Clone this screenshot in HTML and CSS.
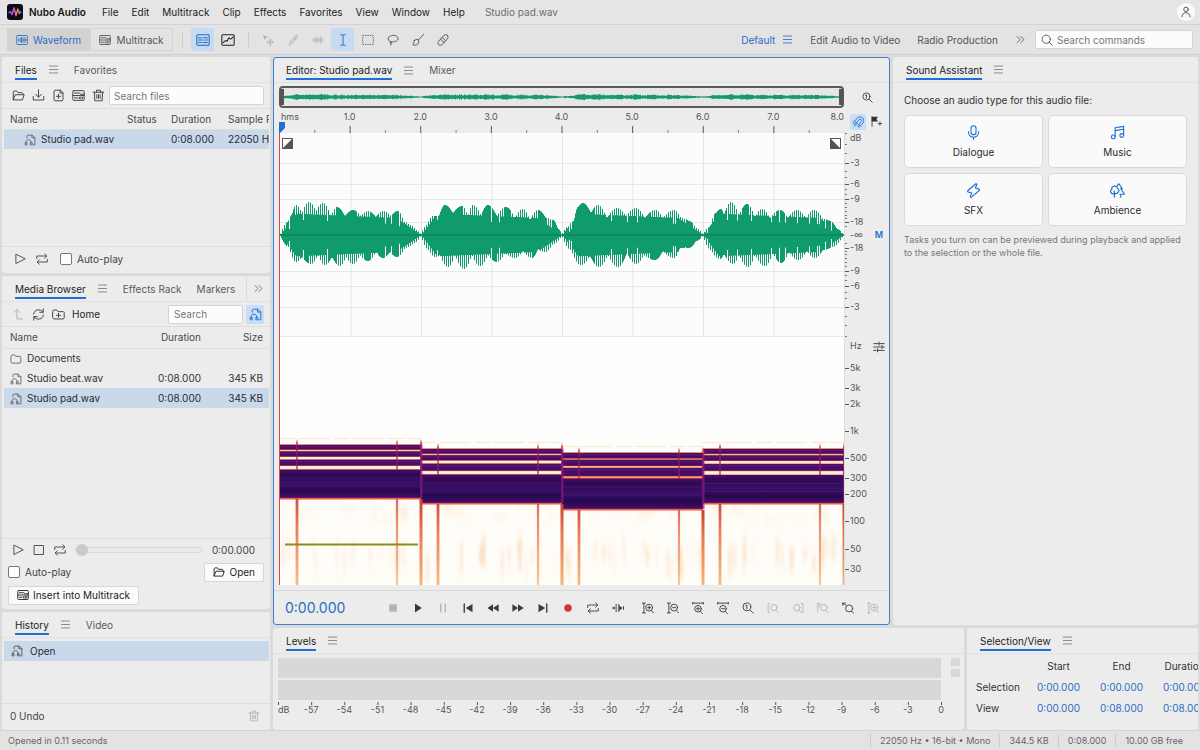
FILE: index.html
```html
<!DOCTYPE html>
<html lang="en">
<head>
<meta charset="utf-8">
<title>Nubo Audio</title>
<link rel="stylesheet" href="styles.css">
</head>
<body>
<svg class="sprite" aria-hidden="true">
  <symbol id="menu" viewBox="0 0 16 16"><path d="M2 3h12M2 8h12M2 13h12"/></symbol>
  <symbol id="wave" viewBox="0 0 16 16"><rect x="1" y="2" width="14" height="12" rx="1"/><path d="M3.500 7v2M5.500 5.500v5M7.500 4.500v7M9 6.500v3M10.700 4.500v7M12.700 6.500v3"/></symbol>
  <symbol id="tracks" viewBox="0 0 16 16"><rect x="1" y="2" width="14" height="12" rx="1"/><path d="M1 8h14M3 5h6l2 1.500h4M3 11h4M9 10v2M11 9.500v3M13 10v2"/></symbol>
  <symbol id="spectral" viewBox="0 0 16 16"><rect x="1" y="2" width="14" height="12" rx="1"/><path d="M3 5.500h3M8 5.500h5M3 8h5M10 8h3M3 10.800h3M8 10.800h5"/></symbol>
  <symbol id="pitch" viewBox="0 0 16 16"><rect x="1" y="2" width="14" height="12" rx="1"/><path d="M2.500 11l3-2.500 1.500 1 2-4 2 1.500L14 4.500"/></symbol>
  <symbol id="move" viewBox="0 0 16 16"><path class="solid" d="M1 1l7 3-3 1.200L3.800 8z"/><path class="solid" d="M11 6l2 2.500h-1.300v1.800H13.500V9L16 11l-2.500 2v-1.300h-1.800v1.800H13l-2 2.500-2-2.500h1.300v-1.800H8.500V13L6 11l2.500-2v1.300h1.800V8.500H9z"/></symbol>
  <symbol id="razor" viewBox="0 0 16 16"><path d="M3 14.500l2.500-5.500L11 2.500l3-1-1 4-5.500 6zM5.500 9l2.500 2.500M11 4.500v2M9.500 6v2"/></symbol>
  <symbol id="slip" viewBox="0 0 16 16"><path d="M0 8h6M10 8h6M5 3.500v9M7.200 5.500v5M9 5.500v5M11.200 3.500v9M3 6v4M13.200 6v4"/></symbol>
  <symbol id="ibeam" viewBox="0 0 16 16"><path d="M5 1h2l1 .8L9 1h2M8 1.800v12.400M5 15h2l1-.8 1 .8h2"/></symbol>
  <symbol id="marquee" viewBox="0 0 16 16"><rect x="1" y="2" width="14" height="12" stroke-dasharray="1.800 1.400" stroke-linecap="butt"/></symbol>
  <symbol id="lasso" viewBox="0 0 16 16"><path d="M5 10.500C-1.500 8 1.500 1.800 8.500 1.800S17.500 8.500 10 10.200c-2 .5-3.500.5-5 .3M5 10.500c-2 .5-1.500 2.500 0 2s1-2 0-2M5.500 12.500c.5 1 0 2-1 2.800"/></symbol>
  <symbol id="brush" viewBox="0 0 16 16"><path d="M15.500.5L8.500 8M3 8.500l4-1.500 2.500 2.300-2 4.500c-2 1.500-4.500 1.200-6.500.5 1.500-1 1.500-3.500 2-5.800z"/></symbol>
  <symbol id="heal" viewBox="0 0 16 16"><rect x="4.800" y="-.5" width="6.400" height="17" rx="3.200" transform="rotate(42 8 8)"/><path d="M4.500 7l5 4.300M6.700 4.500l4.800 4.300"/></symbol>
  <symbol id="more" viewBox="0 0 16 16"><path d="M3 3.500L7.500 8 3 12.500M8.500 3.500L13 8l-4.500 4.500"/></symbol>
  <symbol id="search" viewBox="0 0 16 16"><circle cx="7" cy="7" r="5.500"/><path d="M11 11l4 4"/></symbol>
  <symbol id="user" viewBox="0 0 16 16"><circle cx="8" cy="4.500" r="3"/><path d="M2.500 14.500c0-7.500 11-7.500 11 0"/></symbol>
  <symbol id="open" viewBox="0 0 16 16"><path d="M1.500 13V3.500l1-1h3.500l1.500 2h5l1 1V7M1.500 13L4 7h11l-2 6z"/></symbol>
  <symbol id="folder" viewBox="0 0 16 16"><path d="M1.500 4l1-1.500h3.500l1.500 2h6l1 1V12l-1 1.500h-11l-1-1.500z"/></symbol>
  <symbol id="newfolder" viewBox="0 0 16 16"><path d="M1 4l1-1.500h4l1.500 2H14l1 1V12l-1 1.500H2L1 12zM8 6.500v5M5.500 9h5"/></symbol>
  <symbol id="import" viewBox="0 0 16 16"><path d="M8 1v9M4.500 6.500L8 10l3.500-3.500M1.500 9v4.500h13V9"/></symbol>
  <symbol id="newfile" viewBox="0 0 16 16"><path d="M10 1.500H3.500l-1 1v11l1 1h9l1-1V5zM10 1.500V5h3.500M8 6.500v5M5.500 9h5"/></symbol>
  <symbol id="trash" viewBox="0 0 16 16"><path d="M1.500 4h13M5.500 4V1.500h5V4M3 4l.5 10.500h9L13 4M6 7v4.500M8 7v4.500M10 7v4.500"/></symbol>
  <symbol id="audiofile" viewBox="0 0 16 16"><path d="M4 5V2.500l1-1h6L14.500 5v9.500H12.500M10.500 1.500V5h4"/><path d="M2.500 12v-1c0-4.500 7-4.500 7 0v1M3.500 11.500H1.500v3h2zM10.500 11.500h-2v3h2z"/></symbol>
  <symbol id="play" viewBox="0 0 16 16"><path d="M2.500 2v12L14.500 8z"/></symbol>
  <symbol id="stop" viewBox="0 0 16 16"><rect x="2" y="2" width="12" height="12"/></symbol>
  <symbol id="loop" viewBox="0 0 16 16"><path d="M1 7.500V4h13M11.500 1L14.500 4l-3 3M15 8.500V12H2M4.500 9l-3 3 3 3"/></symbol>
  <symbol id="up" viewBox="0 0 16 16"><path d="M2.500 5.500L6 2l3.500 3.500M6 2v11.500h7"/></symbol>
  <symbol id="refresh" viewBox="0 0 16 16"><path d="M2 7.500C2.500 1.500 10 .5 13.500 5M13.800 1V5.300H9.500M14 8.500c-.5 6-8 7-11.500 2.500M2.200 15v-4.300H6.500"/></symbol>
  <symbol id="mic" viewBox="0 0 16 16"><rect x="5.300" y=".8" width="5.400" height="9.500" rx="2.700"/><path d="M2.500 7c0 8 11 8 11 0M8 13v2.500"/></symbol>
  <symbol id="music" viewBox="0 0 16 16"><path d="M5.500 12.500V3l9-1.500v9.500M5.500 6l9-1.500"/><circle cx="3.500" cy="12.700" r="2"/><circle cx="12.500" cy="11.200" r="2"/></symbol>
  <symbol id="bolt" viewBox="0 0 16 16"><path d="M10.500.8L2 8l-.3 1.300 4.500 1.500L4.500 15l1 .3L14.200 8l.2-1.200-4.400-1.500L11.700 1z"/></symbol>
  <symbol id="trees" viewBox="0 0 16 16"><path d="M4.700 15.200V8.500M4.700 11.500C-.5 12 0 7.500 2 6.800c-1-4 5.500-4.800 6-1 2.500 1.200 1.800 5.700-3.300 5.700zM7.500 3L9.500.8 13 6h-1.500l4 6h-5M11.500 12v3.200"/></symbol>
  <symbol id="magnet" viewBox="0 0 16 16"><path d="M1.500 8.500l5.500-5.500c5-5 11.500 1.500 7.500 6.500L9.500 15l-2.200-2.200 5-5.300c1.500-2-.8-4.200-2.800-2.700L4 10.800zM3.500 6.800l2.300 2.300M9 11l2.300 2.300M3 14l4-4.500"/></symbol>
  <symbol id="flag" viewBox="0 0 16 16"><path class="solid" d="M1 1h9L8 4.300 10 8H1z"/><path d="M1.500 1v14M13 8.500v5M10.500 11h5"/></symbol>
  <symbol id="sliders" viewBox="0 0 16 16"><path d="M1 3.500h5M8 3.500h7M1 8h9M12 8h3M1 12.500h3M6 12.500h9M8 1.500v4M12 6v4M6 10.500v4"/></symbol>
  <symbol id="zoomfit" viewBox="0 0 16 16"><circle cx="6.500" cy="6.500" r="5.200"/><path d="M10.500 10.500l4.500 4.500M5 5l1.500-1v5"/></symbol>
  <symbol id="fplay" viewBox="0 0 16 16"><path class="solid" d="M4 2v12l9-6z"/></symbol>
  <symbol id="fstop" viewBox="0 0 16 16"><rect class="solid" x="3" y="3" width="10" height="10"/></symbol>
  <symbol id="fpause" viewBox="0 0 16 16"><path stroke-width="2" d="M5 3v10M11 3v10"/></symbol>
  <symbol id="first" viewBox="0 0 16 16"><path stroke-width="1.800" d="M3 2.500v11"/><path class="solid" d="M14 2.500v11L5 8z"/></symbol>
  <symbol id="last" viewBox="0 0 16 16"><path stroke-width="1.800" d="M13 2.500v11"/><path class="solid" d="M2 2.500v11L11 8z"/></symbol>
  <symbol id="rew" viewBox="0 0 16 16"><path class="solid" d="M8 3v10L.5 8zM15.500 3v10L8 8z"/></symbol>
  <symbol id="ffwd" viewBox="0 0 16 16"><path class="solid" d="M8 3v10l7.500-5zM.5 3v10L8 8z"/></symbol>
  <symbol id="rec" viewBox="0 0 16 16"><circle class="solid" cx="8" cy="8" r="5"/></symbol>
  <symbol id="skip" viewBox="0 0 16 16"><path d="M.5 8H4M5.500 3v10M9 3v10M15.300 6v4M2.500 6.500v3"/><path class="solid" d="M9.500 4.500v7L14 8z"/></symbol>
  <symbol id="zi-v" viewBox="0 0 16 16"><path d="M.5 1.500h4M2.500 1.500v13M.5 14.500h4M12.500 11.500L15.500 14.500M7.500 7.500h4M9.500 5.500v4"/><circle cx="9.500" cy="7.500" r="4.600"/></symbol>
  <symbol id="zo-v" viewBox="0 0 16 16"><path d="M.5 1.500h4M2.500 1.500v13M.5 14.500h4M12.500 11.500L15.500 14.500M7.500 7.500h4"/><circle cx="9.500" cy="7.500" r="4.600"/></symbol>
  <symbol id="zi-h" viewBox="0 0 16 16"><path d="M1 1.500h14M1 .3v2.400M15 .3v2.400M11 12.500l3 3M6 9h4M8 7v4"/><circle cx="8" cy="9" r="4.400"/></symbol>
  <symbol id="zo-h" viewBox="0 0 16 16"><path d="M1 1.500h14M1 .3v2.400M15 .3v2.400M11 12.500l3 3M6 9h4"/><circle cx="8" cy="9" r="4.400"/></symbol>
  <symbol id="z-in" viewBox="0 0 16 16"><path d="M3.500 2H1.500v12h2M12.500 11.500L15.500 14.500"/><circle cx="9.200" cy="7.500" r="4.200"/></symbol>
  <symbol id="z-out" viewBox="0 0 16 16"><path d="M12.500 2h2v12h-2M9 11l3 3"/><circle cx="6.500" cy="7.500" r="4.200"/></symbol>
  <symbol id="z-sel" viewBox="0 0 16 16"><path d="M1 2v11M3.500 2v4M1 2h3M12.500 11.500L15.500 14.500"/><circle cx="9.200" cy="7.500" r="4.200"/></symbol>
  <symbol id="z-back" viewBox="0 0 16 16"><path d="M1 1.500l4 2.500M1 4.500v-3h3.500M13 12.500L15.500 15"/><circle cx="9.500" cy="8.500" r="4.700"/></symbol>
</svg>

<header class="titlebar">
  <svg class="logo" viewBox="0 0 16 16" aria-hidden="true"><defs><linearGradient id="lg"><stop offset="0" stop-color="#4a7dff"/><stop offset=".4" stop-color="#e04fd0"/><stop offset=".65" stop-color="#ff8a3d"/><stop offset="1" stop-color="#5b7cff"/></linearGradient></defs><rect width="16" height="16" rx="3" fill="#0b0b1c"/><path d="M1.500 9l2-1.500 1.500 3 2-6.500 2 7.500L10.800 5l1.500 4.500 1-1.500h1.200" fill="none" stroke="url(#lg)" stroke-width="1.400" stroke-linejoin="round"/></svg>
  <strong class="brand">Nubo Audio</strong>
  <nav class="menus"><button>File</button><button>Edit</button><button>Multitrack</button><button>Clip</button><button>Effects</button><button>Favorites</button><button>View</button><button>Window</button><button>Help</button></nav>
  <span class="doc">Studio pad.wav</span>
  <button class="avatar" aria-label="Account"><svg class="i"><use href="#user"/></svg></button>
</header>

<div class="toolbar">
  <div class="modes"><button class="on"><svg class="i"><use href="#wave"/></svg>Waveform</button><button><svg class="i"><use href="#tracks"/></svg>Multitrack</button></div>
  <div class="tools views"><button class="on" aria-label="Spectral display"><svg class="i lg"><use href="#spectral"/></svg></button><button aria-label="Pitch display"><svg class="i lg dark"><use href="#pitch"/></svg></button></div>
  <div class="tools"><button disabled aria-label="Move"><svg class="i"><use href="#move"/></svg></button><button disabled aria-label="Razor"><svg class="i"><use href="#razor"/></svg></button><button disabled aria-label="Slip"><svg class="i"><use href="#slip"/></svg></button><button class="on" aria-label="Time selection"><svg class="i"><use href="#ibeam"/></svg></button><button aria-label="Marquee"><svg class="i"><use href="#marquee"/></svg></button><button aria-label="Lasso"><svg class="i"><use href="#lasso"/></svg></button><button aria-label="Paintbrush"><svg class="i"><use href="#brush"/></svg></button><button aria-label="Healing"><svg class="i"><use href="#heal"/></svg></button></div>
  <div class="workspaces"><button class="cur">Default <svg class="i sm"><use href="#menu"/></svg></button><button>Edit Audio to Video</button><button>Radio Production</button><button aria-label="More workspaces"><svg class="i sm"><use href="#more"/></svg></button></div>
  <label class="field command"><svg class="i"><use href="#search"/></svg><input placeholder="Search commands" aria-label="Search commands"></label>
</div>

<main class="work">
  <div class="side">
    <section class="panel files">
      <div class="tabs"><button class="tab on">Files</button><button class="burger" aria-label="Panel menu"><svg class="i sm"><use href="#menu"/></svg></button><button class="tab">Favorites</button></div>
      <div class="bar"><button aria-label="Open"><svg class="i"><use href="#open"/></svg></button><button aria-label="Import"><svg class="i"><use href="#import"/></svg></button><button aria-label="New file"><svg class="i"><use href="#newfile"/></svg></button><button aria-label="Insert into Multitrack"><svg class="i"><use href="#tracks"/></svg></button><button aria-label="Delete"><svg class="i"><use href="#trash"/></svg></button><input class="field grow" placeholder="Search files" aria-label="Search files"></div>
      <div class="list"><table class="grid filesgrid">
        <thead><tr><th class="c1">Name</th><th class="c2">Status</th><th class="c3">Duration</th><th>Sample Rate</th></tr></thead>
        <tbody><tr class="sel"><td class="inset"><svg class="i"><use href="#audiofile"/></svg>Studio pad.wav</td><td></td><td>0:08.000</td><td>22050 Hz</td></tr></tbody></table></div>
      <div class="foot"><button aria-label="Play"><svg class="i"><use href="#play"/></svg></button><button aria-label="Loop"><svg class="i"><use href="#loop"/></svg></button><label class="check"><input type="checkbox">Auto-play</label></div>
    </section>

    <section class="panel media">
      <div class="tabs"><button class="tab on">Media Browser</button><button class="burger" aria-label="Panel menu"><svg class="i sm"><use href="#menu"/></svg></button><button class="tab">Effects Rack</button><button class="tab next">Markers</button><button class="overflow" aria-label="More tabs"><svg class="i sm"><use href="#more"/></svg></button></div>
      <div class="bar"><button disabled aria-label="Up"><svg class="i"><use href="#up"/></svg></button><button aria-label="Refresh"><svg class="i"><use href="#refresh"/></svg></button><button aria-label="New folder"><svg class="i"><use href="#newfolder"/></svg></button><span class="path">Home</span><input class="field find" placeholder="Search" aria-label="Search media"><button class="on" aria-label="Audio only"><svg class="i"><use href="#audiofile"/></svg></button></div>
      <div class="list"><table class="grid">
        <thead><tr><th>Name</th><th class="m2">Duration</th><th class="m3">Size</th></tr></thead>
        <tbody><tr><td><svg class="i"><use href="#folder"/></svg>Documents</td><td></td><td></td></tr>
        <tr><td><svg class="i"><use href="#audiofile"/></svg>Studio beat.wav</td><td class="num">0:08.000</td><td class="num">345 KB</td></tr>
        <tr class="sel"><td><svg class="i"><use href="#audiofile"/></svg>Studio pad.wav</td><td class="num">0:08.000</td><td class="num">345 KB</td></tr></tbody></table></div>
      <div class="preview">
        <div class="line player"><button aria-label="Play"><svg class="i"><use href="#play"/></svg></button><button aria-label="Stop"><svg class="i"><use href="#stop"/></svg></button><button aria-label="Loop"><svg class="i"><use href="#loop"/></svg></button><input type="range" value="0" aria-label="Preview position"><span>0:00.000</span></div>
        <div class="line"><label class="check"><input type="checkbox">Auto-play</label><button class="btn"><svg class="i"><use href="#open"/></svg>Open</button></div>
        <div class="line insert"><button class="btn"><svg class="i"><use href="#tracks"/></svg>Insert into Multitrack</button></div>
      </div>
    </section>

    <section class="panel history">
      <div class="tabs"><button class="tab on">History</button><button class="burger" aria-label="Panel menu"><svg class="i sm"><use href="#menu"/></svg></button><button class="tab">Video</button></div>
      <div class="list"><div class="step"><svg class="i"><use href="#audiofile"/></svg>Open</div></div>
      <div class="foot undo"><span>0 Undo</span><button disabled aria-label="Clear history"><svg class="i"><use href="#trash"/></svg></button></div>
    </section>
  </div>

  <div class="stage">
    <div class="upper">
      <section class="panel editor">
        <div class="tabs"><button class="tab on">Editor: Studio pad.wav</button><button class="burger" aria-label="Panel menu"><svg class="i sm"><use href="#menu"/></svg></button><button class="tab">Mixer</button></div>
        <div class="board">
          <div class="overview"><svg id="mini" viewBox="0 0 564 20" preserveAspectRatio="none"></svg></div>
          <div class="gutter one"><button aria-label="Zoom out full"><svg class="i sm"><use href="#zoomfit"/></svg></button></div>
          <svg class="ruler" id="ruler"></svg>
          <div class="gutter two"><button class="on" aria-label="Snapping"><svg class="i"><use href="#magnet"/></svg></button><button aria-label="Add marker"><svg class="i sm"><use href="#flag"/></svg></button></div>
          <div class="plots">
            <svg class="wavebox" id="wavebox"></svg>
            <svg class="specbox" id="spec" viewBox="0 0 564 248" preserveAspectRatio="none"></svg>
            <svg class="fade in" viewBox="0 0 11 11"><rect x=".5" y=".5" width="10" height="10"/><path d="M10 1v9H1z"/></svg>
            <svg class="fade out" viewBox="0 0 11 11"><rect x=".5" y=".5" width="10" height="10"/><path d="M1 1v9h9z"/></svg>
            <svg class="playhead" viewBox="0 0 6 11"><path d="M0 0h6v6L1 11H0z"/></svg>
          </div>
          <div class="scales"><svg id="db"></svg><svg id="hz"></svg><span class="mono">M</span><button class="tune" aria-label="Spectral settings"><svg class="i"><use href="#sliders"/></svg></button></div>
        </div>
        <div class="transport"><output class="time">0:00.000</output>
          <div class="keys">
            <button disabled aria-label="Stop"><svg class="i"><use href="#fstop"/></svg></button><button aria-label="Play"><svg class="i"><use href="#fplay"/></svg></button><button disabled aria-label="Pause"><svg class="i"><use href="#fpause"/></svg></button><button aria-label="To start"><svg class="i"><use href="#first"/></svg></button><button aria-label="Rewind"><svg class="i"><use href="#rew"/></svg></button><button aria-label="Fast forward"><svg class="i"><use href="#ffwd"/></svg></button><button aria-label="To end"><svg class="i"><use href="#last"/></svg></button><button class="rec" aria-label="Record"><svg class="i"><use href="#rec"/></svg></button><button aria-label="Loop"><svg class="i"><use href="#loop"/></svg></button><button aria-label="Skip selection"><svg class="i"><use href="#skip"/></svg></button>
          </div>
          <div class="keys">
            <button aria-label="Zoom in amplitude"><svg class="i"><use href="#zi-v"/></svg></button><button aria-label="Zoom out amplitude"><svg class="i"><use href="#zo-v"/></svg></button><button aria-label="Zoom in time"><svg class="i"><use href="#zi-h"/></svg></button><button aria-label="Zoom out time"><svg class="i"><use href="#zo-h"/></svg></button><button aria-label="Zoom full"><svg class="i"><use href="#zoomfit"/></svg></button><button disabled aria-label="Zoom to in point"><svg class="i"><use href="#z-in"/></svg></button><button disabled aria-label="Zoom to out point"><svg class="i"><use href="#z-out"/></svg></button><button disabled aria-label="Zoom to selection"><svg class="i"><use href="#z-sel"/></svg></button><button aria-label="Previous zoom"><svg class="i"><use href="#z-back"/></svg></button><button disabled aria-label="Reset amplitude zoom"><svg class="i"><use href="#zi-v"/></svg></button>
          </div>
        </div>
      </section>

      <section class="panel assistant">
        <div class="tabs"><button class="tab on">Sound Assistant</button><button class="burger" aria-label="Panel menu"><svg class="i sm"><use href="#menu"/></svg></button></div>
        <div class="ask">
          <p>Choose an audio type for this audio file:</p>
          <div class="cards"><button><svg class="i"><use href="#mic"/></svg>Dialogue</button><button><svg class="i"><use href="#music"/></svg>Music</button><button><svg class="i"><use href="#bolt"/></svg>SFX</button><button><svg class="i"><use href="#trees"/></svg>Ambience</button></div>
          <p class="hint">Tasks you turn on can be previewed during playback and applied to the selection or the whole file.</p>
        </div>
      </section>
    </div>

    <div class="lower">
      <section class="panel levels">
        <div class="tabs"><button class="tab on">Levels</button><button class="burger" aria-label="Panel menu"><svg class="i sm"><use href="#menu"/></svg></button></div>
        <div class="meters"><div class="meter"></div><div class="clips"><i></i><i></i></div><div class="meter"></div><svg class="lscale" id="lscale"></svg></div>
      </section>
      <section class="panel selview">
        <div class="tabs"><button class="tab on">Selection/View</button><button class="burger" aria-label="Panel menu"><svg class="i sm"><use href="#menu"/></svg></button></div>
        <table class="times">
          <thead><tr><th class="lab"></th><th>Start</th><th>End</th><th>Duration</th></tr></thead>
          <tbody><tr><th class="lab">Selection</th><td><input value="0:00.000" aria-label="Selection start"></td><td><input value="0:00.000" aria-label="Selection end"></td><td><input value="0:00.000" aria-label="Selection duration"></td></tr>
          <tr><th class="lab">View</th><td><input value="0:00.000" aria-label="View start"></td><td><input value="0:08.000" aria-label="View end"></td><td><input value="0:08.000" aria-label="View duration"></td></tr></tbody>
        </table>
      </section>
    </div>
  </div>
</main>

<footer class="status"><span class="msg">Opened in 0.11 seconds</span><span>22050 Hz • 16-bit • Mono</span><span>344.5 KB</span><span>0:08.000</span><span class="end">10.00 GB free</span></footer>
<script src="app.js"></script>
</body>
</html>
```
FILE: styles.css
```css
* { box-sizing: border-box; }
body { margin: 0; height: 100vh; display: flex; flex-direction: column; overflow: hidden; background: #dadada; color: #333; font: 10px/14px Inter, "Liberation Sans", sans-serif; }
button, input { font: inherit; color: inherit; }
button { border: 0; padding: 0; background: none; display: flex; align-items: center; justify-content: center; white-space: nowrap; }
.sprite { position: absolute; width: 0; height: 0; }
.i { width: 12px; height: 12px; flex: none; fill: none; stroke: currentColor; stroke-width: 1.2; stroke-linejoin: round; stroke-linecap: round; }
.i.sm { width: 11px; height: 11px; }
.i.lg { width: 14px; height: 14px; }
.i.dark { color: #222; }
.solid { fill: currentColor; stroke: none; }
button:disabled { color: #b4b4b4; }

.titlebar { flex: none; height: 25px; display: flex; align-items: center; padding: 0 5px 0 7px; background: #e5e5e5; border-bottom: 1px solid #d2d2d2; }
.logo { width: 16px; height: 16px; }
.brand { margin-left: 6px; color: #111; font-weight: 600; }
.menus { display: flex; gap: 13px; margin-left: 16px; color: #222; }
.doc { margin-left: 20px; color: #6e6e6e; }
.avatar { margin-left: auto; width: 18px; height: 18px; border-radius: 9px; background: #fafafa; color: #444; }

.toolbar { flex: none; height: 30px; display: flex; align-items: center; padding: 0 7px; background: #e3e3e3; border-bottom: 1px solid #d0d0d0; color: #555; }
.modes { display: flex; }
.modes button { width: 83px; height: 23px; gap: 5px; border: 1px solid #d3d3d3; }
.modes .on { background: #d2d2d2; color: #2a6cc4; }
.tools { display: flex; gap: 2px; margin-left: 9px; padding-left: 9px; position: relative; }
.tools + .tools { padding-left: 8px; }
.tools::before { content: ""; width: 1px; height: 15px; margin: 4px 0; background: #cdcdcd; position: absolute; left: 0; }
.tools button { width: 23px; height: 23px; border-radius: 2px; }
.tools .on { background: #c6daf2; color: #2068c8; }
.workspaces { margin-left: auto; display: flex; gap: 17px; }
.workspaces .cur { color: #2a6cc4; gap: 7px; }
.field { border: 1px solid #d4d4d4; border-radius: 2px; background: #fcfcfc; height: 19px; padding: 0 5px; min-width: 0; outline: 0; }
.field::placeholder, .field input::placeholder { color: #777; opacity: 1; }
.command { width: 158px; margin-left: 9px; display: flex; align-items: center; gap: 4px; }
.command input { border: 0; background: none; padding: 0; min-width: 0; flex: 1; outline: 0; }

.work { flex: 1; min-height: 0; display: flex; gap: 3px; padding: 2px 2px 0; }
.side { width: 268px; flex: none; display: flex; flex-direction: column; gap: 3px; }
.stage { flex: 1; min-width: 0; display: flex; flex-direction: column; gap: 3px; }
.upper { flex: 1; min-height: 0; display: flex; gap: 3px; }
.lower { height: 102px; display: flex; gap: 3px; flex: none; }
.panel { background: #ececec; border-radius: 3px; overflow: hidden; display: flex; flex-direction: column; min-width: 0; }
.files { height: 216px; }
.media { flex: 1; }
.history { height: 118px; }
.editor { flex: 1; border: 1px solid #3b82cf; }
.assistant { width: 305px; }
.levels { flex: 1; }
.selview { width: 231px; }

.tabs { flex: none; height: 26px; display: flex; align-items: center; padding-left: 13px; border-bottom: 1px solid #e1e1e1; }
.editor .tabs { height: 25px; padding-left: 12px; }
.tab { height: 20px; padding-top: 2px; color: #5a5a5a; border-bottom: 2px solid transparent; }
.tab.on { color: #1d1d1d; border-color: #1f6fd6; }
.burger { margin: 0 15px 0 11px; color: #777; }
.tab.next { margin-left: 15px; }
.overflow { margin-left: auto; width: 24px; height: 26px; border-left: 1px solid #dcdcdc; color: #666; }

.bar { flex: none; height: 26px; display: flex; align-items: center; padding: 0 6px; color: #444; border-bottom: 1px solid #dedede; }
.bar button { width: 20px; height: 19px; }
.bar .i { width: 13px; height: 13px; }
.bar button:disabled { color: #b4b4b4; }
.bar .on { background: #c9ddf4; color: #1f6fd6; border-radius: 2px; width: 18px; margin-left: 3px; }
.media .bar { height: 25px; }
.grow { flex: 1; margin-left: 1px; padding: 0 4px; }
.find { width: 75px; margin-left: auto; }
.path { margin-left: 4px; color: #222; }
.list { flex: 1; min-height: 0; overflow: hidden; padding: 0 1px 0 2px; }
.grid { width: 100%; border-collapse: collapse; table-layout: fixed; }
.grid th, .grid td { height: 20px; padding: 0; font-weight: 400; text-align: left; white-space: nowrap; overflow: hidden; }
.grid thead th { color: #4a4a4a; border-bottom: 1px solid #dedede; }
.media .grid thead th { height: 21px; }
.grid tr > :first-child { padding-left: 6px; }
.grid td .i { margin-right: 5px; vertical-align: -3px; color: #666; }
.grid tr > td.inset { padding-left: 20px; }
.c1 { width: 123px; }
.c2 { width: 44px; }
.c3 { width: 57px; }
.m2 { width: 70px; }
.m3 { width: 68px; }
.grid .m2, .grid .m3, .grid .num { text-align: right; }
.grid .m3, .grid .num:last-child { padding-right: 6px; }
.sel, .step { background: #cad9ea; color: #1f2b3a; }
.foot { flex: none; height: 27px; display: flex; align-items: center; padding: 0 12px 2px; gap: 10px; border-top: 1px solid #dedede; color: #444; }
.check { display: flex; align-items: center; gap: 5px; }
.files .check { margin-left: 2px; }
.check input { appearance: none; width: 12px; height: 12px; margin: 0; border: 1px solid #777; border-radius: 2px; background: #fdfdfd; }
.preview { flex: none; height: 71px; border-top: 1px solid #dedede; color: #444; padding: 0 6px; }
.line { display: flex; align-items: center; justify-content: space-between; height: 22px; }
.line.insert { height: 24px; }
.player { justify-content: flex-start; padding: 0 9px 0 4px; gap: 9px; }
.player input { appearance: none; flex: 1; min-width: 0; margin: 0; height: 6px; border: 1px solid #dadada; border-radius: 3px; background: #e9e9e9; }
.player input::-webkit-slider-thumb { appearance: none; width: 12px; height: 12px; border-radius: 6px; background: #c9c9c9; }
.btn { height: 19px; padding: 0 8px; gap: 4px; background: #fafafa; border: 1px solid #d6d6d6; border-radius: 2px; color: #222; }
.history .list { padding-top: 3px; }
.step { height: 20px; display: flex; align-items: center; gap: 7px; padding-left: 7px; }
.step .i { color: #555; }
.undo { justify-content: space-between; padding: 0 10px 2px 8px; }

.board { flex: 1; min-height: 0; display: grid; grid-template: 22px 25px 1fr / 1fr 45px; padding: 3px 0 5px 5px; border-bottom: 1px solid #d8d8d8; }
.overview { border: 2px solid #5a5a5a; border-radius: 4px; background: #e6e6e6; position: relative; }
.overview svg { width: 100%; height: 100%; display: block; }
.overview::before, .overview::after { content: ""; position: absolute; top: 1px; bottom: 1px; width: 4px; background: #555; left: -1px; }
.overview::after { left: auto; right: -1px; }
.gutter { display: flex; align-items: center; color: #333; }
.one { padding-left: 18px; }
.two { padding: 2px 0 0 6px; gap: 2px; }
.two button { width: 16px; height: 16px; border-radius: 2px; }
.two .on { background: #c9ddf4; color: #1f6fd6; }
.ruler { width: 100%; height: 100%; display: block; }
svg text { font: 9px Inter, "Liberation Sans", sans-serif; fill: #555; }
.plots { position: relative; display: grid; grid-template-rows: 204fr 248fr; min-height: 0; border-left: 1px solid #e04540; background: #fcfcfc; }
.plots > svg { min-height: 0; }
.wavebox, .specbox { width: 100%; height: 100%; display: block; }
.fade { position: absolute; top: 5px; width: 11px; height: 11px; fill: #fff; stroke: #555; }
.fade path { fill: #555; stroke: none; }
.fade.in { left: 2px; }
.fade.out { right: 3px; }
.playhead { position: absolute; left: -1px; top: -11px; width: 6px; height: 11px; fill: #1f6fd6; }
.scales { display: grid; grid-template-rows: 204fr 248fr; position: relative; min-height: 0; border-left: 1px solid #dcdcdc; }
.scales > svg { width: 100%; height: 100%; display: block; min-height: 0; }
.mono { position: absolute; right: 6px; top: 95px; font-size: 9px; color: #1f6fd6; font-weight: 600; }
.tune { position: absolute; right: 4px; top: 208px; color: #333; }
.transport { flex: none; height: 33px; display: flex; align-items: center; padding: 0 4px 0 11px; }
.time { width: 95px; font-size: 14px; color: #2a6cc4; }
.keys { display: flex; color: #3a3a3a; }
.keys + .keys { margin-left: 5px; }
.keys button { width: 25px; height: 24px; }
.keys .rec { color: #d8322f; }

.ask { padding: 10px 11px; color: #333; }
.ask p { margin: 0; }
.cards { display: grid; grid-template-columns: 1fr 1fr; gap: 5px; margin: 8px 0 7px; }
.cards button { flex-direction: column; gap: 5px; height: 53px; background: #fafafa; border: 1px solid #d9d9d9; border-radius: 5px; color: #2a2a2a; }
.cards .i { width: 15px; height: 15px; color: #1f6fd6; }
.ask .hint { font-size: 9px; line-height: 13px; color: #777; }

.meters { flex: 1; display: grid; grid-template: 20px 20px 1fr / 1fr 14px; column-gap: 5px; row-gap: 2px; padding: 4px 4px 0 5px; }
.meter { background: #d8d8d8; }
.clips { display: flex; flex-direction: column; gap: 3px; grid-column: 2; padding-left: 5px; }
.clips i { width: 9px; height: 8px; background: #d8d8d8; }
.lscale { width: 100%; height: 20px; overflow: visible; grid-column: 1; }
.times { width: 240px; table-layout: fixed; border-collapse: collapse; margin: 1px 0 0 9px; }
.times th, .times td { padding: 0; height: 21px; font-weight: 400; text-align: center; }
.times th.lab { width: 51px; text-align: left; }
.times input { width: 100%; border: 0; padding: 0; background: none; text-align: center; color: #2a6cc4; outline: 0; }

.status { flex: none; height: 20px; display: flex; align-items: center; background: #e3e3e3; border-top: 1px solid #d4d4d4; color: #666; font-size: 9px; padding: 0 8px; }
.status span { padding: 0 9px; border-left: 1px solid #cecece; }
.status .msg { border: 0; padding: 0; margin-right: auto; }
```
FILE: app.js
```js
const $ = id => document.getElementById(id);
let seed = 7;
const rnd = () => (seed = (seed * 16807) % 2147483647) / 2147483647;

// Peak envelopes for the four two-second chords: [x, height above centre], [x, depth below].
const tops = [
  [0,0,8,13,12,20,16,30,22,22,29,33,36,24,43,32,51,19,57,28,65,19,73,25,81,19,88,24,96,18,103,24,111,19,118,24,124,13,130,10,136,5,141,1],
  [141,1,147,10,153,19,159,19,165,30,173,22,182,29,188,19,193,30,201,20,208,30,217,19,226,28,235,17,243,26,250,15,258,25,266,17,273,15,278,6,282,1],
  [282,1,288,8,294,14,298,28,303,32,311,22,318,30,327,17,337,27,346,19,356,27,365,17,375,25,383,17,394,25,401,17,409,14,416,7,423,1],
  [423,1,430,8,436,22,441,26,444,20,451,33,459,20,467,31,475,18,482,26,490,17,500,25,508,17,517,25,526,17,534,25,543,16,550,14,557,6,564,0]
].flat();
const bottoms = [
  [0,0,9,12,16,27,22,22,31,29,38,20,45,30,52,22,60,31,66,22,73,29,80,20,88,26,96,17,103,23,110,17,117,22,125,13,134,8,141,1],
  [141,1,149,15,155,22,160,20,168,32,175,20,184,34,192,20,200,31,208,20,217,27,225,18,235,23,243,16,252,23,258,14,265,17,273,9,282,1],
  [282,1,291,15,301,30,310,21,319,32,328,20,338,32,347,18,356,29,364,20,375,25,383,16,394,23,400,13,409,13,416,6,423,1],
  [423,1,431,15,440,24,444,19,453,29,459,20,468,32,475,20,485,31,493,18,501,28,509,17,518,25,527,16,535,23,543,15,552,12,564,0]
].flat();
// Eased interpolation gives each swell a rounded crest.
const at = (p, x) => { for (let i = 2; i < p.length; i += 2) if (x <= p[i]) { const t = (x - p[i-2]) / ((p[i] - p[i-2]) || 1), up = p[i+1] > p[i-1]; return p[i-1] + (p[i+1] - p[i-1]) * (up ? Math.sin(t * Math.PI / 2) : 1 - Math.cos(t * Math.PI / 2)); } return 0; };
const core = x => { const u = (x % 141) / 141; return Math.min(190 * u, 22 - 6 * u, 95 * (1 - u)); };

let bars = '', mini = '', openTop = true, openBottom = false;
for (let x = 0; x < 564; x++) {
  const a = at(tops, x + .5), b = at(bottoms, x + .5), c = Math.max(0, core(x));
  if (x % 7 === 0) { openTop = rnd() < .7; openBottom = rnd() < .7; }
  const thin = x % 2 === 1;
  const notch = thin && rnd() < .1 ? 6 : 0;
  const up = thin && (openTop || notch) ? Math.min(a, Math.max(c - notch, a / 3)) : a, dn = thin && (openBottom || notch) ? Math.min(b, Math.max(c - notch, b / 3)) : b;
  bars += `M${x} ${(102 - Math.max(up, .5)).toFixed(1)}h1V${(102 + Math.max(dn, .5)).toFixed(1)}h-1z`;
  const m = a / 33 * (1.600 + rnd() * 1.600) + .4;
  mini += `M${x} ${(10 - m).toFixed(1)}h1V${(10 + m).toFixed(1)}h-1z`;
}
$('mini').innerHTML = `<path fill="#159a6c" d="${mini}"/>`;

const secs = [1,2,3,4,5,6,7];
let g = '';
secs.forEach(s => g += `<path fill="#dfe7e5" d="M${s * 70.5} 0h1v204h-1z"/>`);
[30, 51, 66, 89, 138, 153, 174, 203].forEach(y => g += `<path fill="#e5eae9" d="M0 ${y}h564v1H0z"/>`);
$('wavebox').innerHTML = `<svg viewBox="0 0 564 204" width="100%" height="100%" preserveAspectRatio="none">${g}<path fill="#109b6b" d="${bars}"/><path fill="#0a7d55" d="M0 101.500h564v1H0z"/></svg>`;

let r = '<text x="2" y="9">hms</text><text x="100%" y="12" text-anchor="end">8.0</text>';
for (let i = 1; i < 16; i++) {
  const p = i * 6.25;
  if (i % 2) r += `<rect x="${p}%" y="22" width="1" height="3" fill="#888"/>`;
  else r += `<rect x="${p}%" y="18" width="1" height="7" fill="#555"/><text x="${p}%" y="12" text-anchor="middle">${i / 2}.0</text>`;
}
$('ruler').innerHTML = r.replace('y="9"', 'y="12"');

const scale = (id, h, rows, minor) => {
  $(id).innerHTML = minor.map(y => `<rect x="0" y="${y / h * 100}%" width="2" height="1" fill="#777"/>`).join('') +
    rows.map(([t, y, plain]) => (plain ? '' : `<rect y="${y / h * 100}%" width="4" height="1" fill="#555"/>`) + `<text x="5" y="${y / h * 100}%" dy="3">${t}</text>`).join('');
};
const half = [0, 11, 20, 38, 44, 56, 61, 70, 74, 78, 82, 85, 93];
scale('db', 204, [['dB',5,1],['-3',30],['-6',51],['-9',66],['-18',89],['-∞',102,1],['-18',115],['-9',138],['-6',153],['-3',174]], [...half, ...half.map(y => 203 - y)]);
scale('hz', 248, [['Hz',9,1],['5k',31],['3k',51],['2k',67],['1k',94],['500',121],['300',141],['200',157],['100',184],['50',212],['30',232]], []);

let l = '';
for (let i = 0; i <= 20; i++) {
  const n = -60 + i * 3;
  l += `<rect x="${i * 5}%" y="0" width="1" height="3" fill="#555"/><text x="${i * 5}%" y="11" text-anchor="${i ? 'middle' : 'start'}">${i ? n : 'dB'}</text>`;
}
$('lscale').innerHTML = l;

// Spectrogram: four chords of stacked harmonics with transient streaks between them.
const chords = [
  [[108,112.5],[114.5,119.5],[122.8,128.5],[132.7,161]],
  [[112,116.5],[118.3,123.3],[126.8,133.6],[137.6,166]],
  [[116,121.3],[122.8,128.8],[131,139],[141.5,172]],
  [[112,116.7],[118.5,123.6],[127,133.7],[138,166]]
];
let s = `<defs><filter id="soft" x="-50%" y="-20%" width="200%" height="140%"><feGaussianBlur stdDeviation="1.600 4"/></filter>
<filter id="glow" x="-50%" y="-20%" width="200%" height="140%"><feGaussianBlur stdDeviation=".6"/></filter>
<linearGradient id="streak" x2="0" y2="1"><stop offset="0" stop-color="#c8402f"/><stop offset=".35" stop-color="#e8744c"/><stop offset="1" stop-color="#f6b878"/></linearGradient>
<linearGradient id="body" x2="0" y2="1"><stop offset="0" stop-color="#4b0c6b"/><stop offset=".15" stop-color="#2d0a55"/><stop offset=".5" stop-color="#3a0f68"/><stop offset=".75" stop-color="#240a4e"/><stop offset=".95" stop-color="#420b66"/><stop offset="1" stop-color="#8a1a6a"/></linearGradient></defs>
<rect width="564" height="248" fill="#fdfdfb"/><rect y="166" width="564" height="82" fill="#fffdf8"/><g filter="url(#soft)">`;
for (let i = 0; i < 80; i++) {
  const x = rnd() * 564, y = 196 + rnd() * 22;
  s += `<rect x="${x.toFixed(1)}" y="${y.toFixed(1)}" width="${(1.5 + rnd() * 2.5).toFixed(1)}" height="${(14 + rnd() * 18).toFixed(1)}" fill="#f3b77c" opacity="${(x < 140 ? .12 : .1 + rnd() * .22).toFixed(2)}"/>`;
}
for (let i = 0; i < 60; i++) s += `<rect x="${(rnd() * 554).toFixed(1)}" y="${(168 + rnd() * 14).toFixed(1)}" width="${(4 + rnd() * 12).toFixed(1)}" height="4" fill="#f8c898" opacity=".18"/>`;
s += '</g>';
chords.forEach((bands, k) => {
  const x = k * 141, top = bands[0][0], end = bands[3][1];
  s += `<path d="M${x} ${top - 6.500}h141" stroke="#f7e8cf" stroke-dasharray="16 3 30 5"/>`;
  s += `<g><rect x="${x}" y="${top - .7}" width="141" height="${end - top + 2.200}" fill="#e8603f"/>`;
  bands.forEach(([a, b], n) => {
    if (n) { const p = bands[n-1][1], pale = k === 2 && n === 3 ? '#f79a62' : a - p > 2.600 ? '#fdeedd' : '#fbcba8'; s += `<rect x="${x}" y="${p + .5}" width="141" height="${a - p - 1}" fill="${pale}"/>`; }
    s += `<rect x="${x}" y="${a}" width="141" height="${b - a}" fill="${n === 3 ? 'url(#body)' : '#460d66'}"/>`;
    if (n < 3) s += `<rect x="${x}" y="${a + 1}" width="141" height="1.500" fill="#5d1270"/>`;
  });
  s += `<rect x="${x}" y="${bands[3][0] + 8}" width="141" height="1" fill="#57177c" opacity=".6"/><rect x="${x}" y="${bands[3][0] + 16}" width="141" height="1" fill="#57177c" opacity=".6"/></g>`;
});
s += '<g filter="url(#glow)">';
chords.forEach((bands, k) => {
  const x = k * 141, top = bands[0][0], end = bands[3][1];
  [[17, 2.800, .9], [117, 2.200, .75], [141, 3, 1]].forEach(([o, w, op]) => {
    s += `<rect x="${x + o - w / 2}" y="${end + 1}" width="${w}" height="${248 - end}" fill="url(#streak)" opacity="${op}"/>
    <path d="M${x + o - w / 2} ${top}l${w / 2} -6l${w / 2} 6z" fill="#d9583c"/><rect x="${x + o - 1}" y="${top}" width="2" height="${bands[3][0] - top}" fill="#8c1c58" opacity=".6"/>`;
  });
  s += `<rect x="${x + 140}" y="${top}" width="2.500" height="${end - top}" fill="#8b1f78" opacity=".7"/>`;
});
s += '</g><path d="M5 207.500h133" stroke="#8d8a22" stroke-width="1.800"/>';
$('spec').innerHTML = s;
```
